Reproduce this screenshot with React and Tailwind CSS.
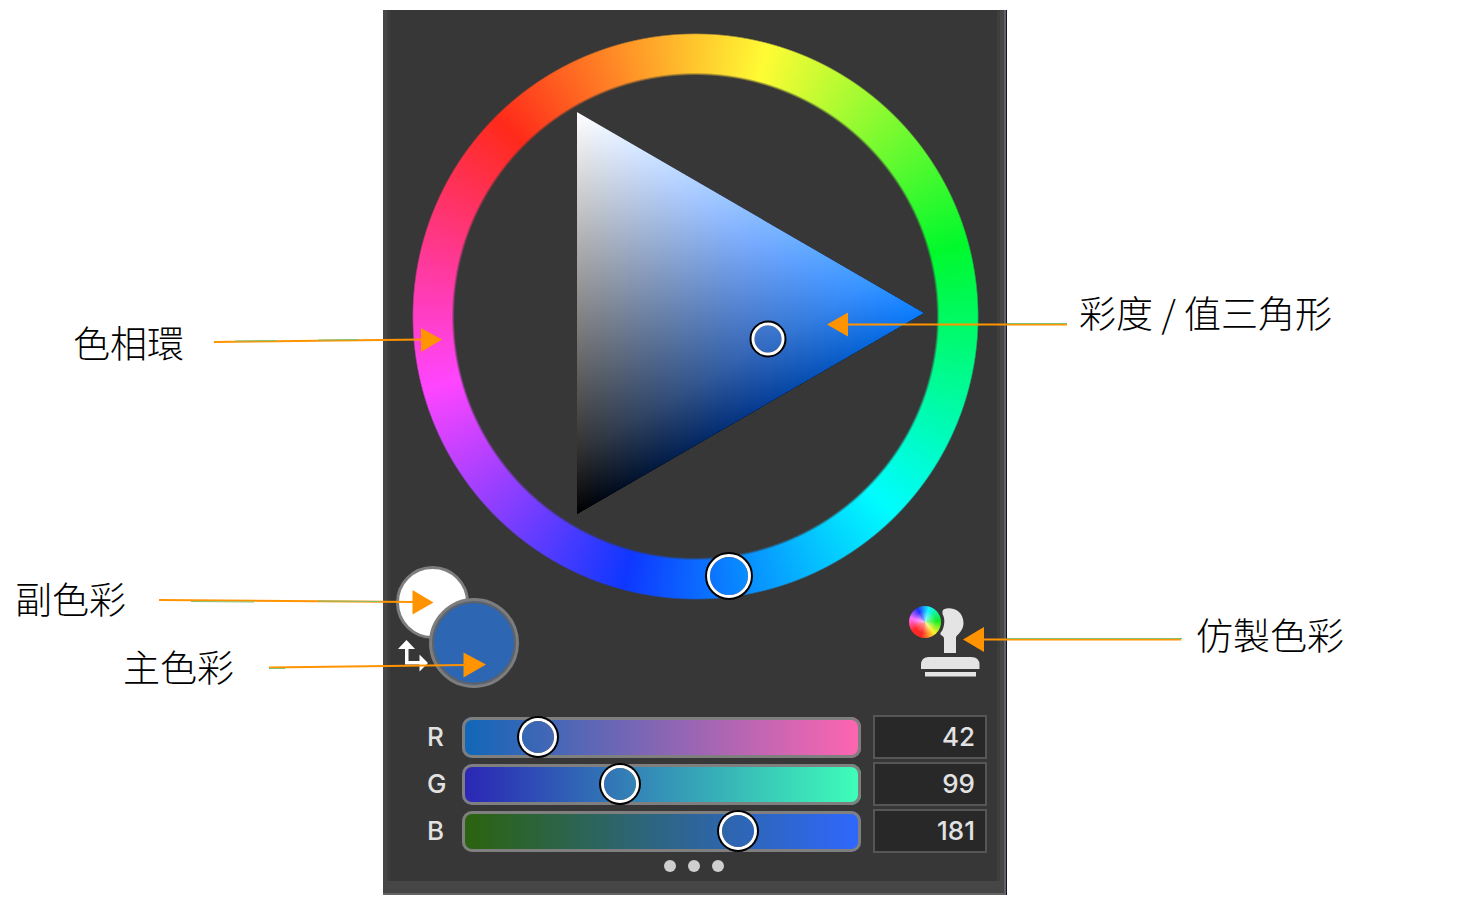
import { useState } from 'react';

const channels = [
  {
    id: 'red',
    label: 'R',
    value: 42,
    track: 'bg-linear-to-r/srgb from-[#0f67b8] to-[#ff65b1]',
  },
  {
    id: 'green',
    label: 'G',
    value: 99,
    track: 'bg-linear-to-r/srgb from-[#2b25b5] to-[#3effb9]',
  },
  {
    id: 'blue',
    label: 'B',
    value: 181,
    track: 'bg-linear-to-r/srgb from-[#2b630c] to-[#2f67ff]',
  },
];

function Handle({ cx, cy, r }) {
  return (
    <g fill="none">
      <circle cx={cx} cy={cy} r={r + 1} stroke="#000" strokeWidth="5" />
      <circle cx={cx} cy={cy} r={r} stroke="#fff" strokeWidth="3" />
    </g>
  );
}

function ColorWheel() {
  return (
    <div className="relative ml-[22px] mr-[18px] mt-[23px] aspect-square">
      <div className="size-full rounded-full bg-[conic-gradient(from_315deg,#ff2a1a,#fffb34_60deg,#00f92c_120deg,#00fdff_180deg,#0f37ff_240deg,#ff45ff_300deg,#ff2a1a)] mask-[radial-gradient(closest-side,transparent_85%,#000_86%,#000_99.4%,transparent)]" />
      <svg
        viewBox="0 0 567 567"
        className="absolute inset-0 size-full"
        role="img"
        aria-label="彩度 / 值三角形"
      >
        <defs>
          <linearGradient id="hue" gradientUnits="userSpaceOnUse" x1="165" y1="0" x2="512" y2="0">
            <stop offset="0" stopColor="#000" />
            <stop offset="0.5" stopColor="#05388c" />
            <stop offset="1" stopColor="#0a7cff" />
          </linearGradient>
          <linearGradient id="white" gradientUnits="userSpaceOnUse" x1="165" y1="79" x2="339" y2="380">
            <stop offset="0" stopColor="#fff" />
            <stop offset="0.5" stopColor="#868584" />
            <stop offset="0.85" stopColor="#2f2f2e" />
            <stop offset="1" stopColor="#000" />
          </linearGradient>
        </defs>
        <g className="isolate">
          <path d="M165 79V481L512 280Z" fill="url(#hue)" />
          <path d="M165 79V481L512 280Z" fill="url(#white)" className="mix-blend-plus-lighter" />
        </g>
        <Handle cx={356} cy={306} r={15} />
        <Handle cx={317} cy={543} r={20.5} />
      </svg>
    </div>
  );
}

function Swatches() {
  return (
    <div className="relative h-[122px] w-[123px]">
      <button
        type="button"
        aria-label="副色彩"
        className="absolute left-0 top-0 size-[73px] rounded-full border-3 border-[#7d7d7d] bg-white"
      />
      <button
        type="button"
        aria-label="主色彩"
        className="absolute bottom-0 right-0 size-[90px] rounded-full border-3 border-[#7d7d7d] bg-[#2d66b3] shadow-[inset_0_0_0_2px_#626262]"
      />
      <button type="button" aria-label="交換色彩" className="absolute bottom-4 left-0.5">
        <svg width="30" height="32" viewBox="0 0 30 32" fill="#fff">
          <path d="M8.500 0L17 9H10.500V21H21.500V14.500L30 23L21.500 31.500V24.500H7V9H0Z" />
        </svg>
      </button>
    </div>
  );
}

function CloneButton() {
  return (
    <button type="button" aria-label="仿製色彩" className="relative mb-2.5 self-end">
      <svg width="72" height="73" viewBox="0 0 72 73" fill="#e4e4e4">
        <path d="M34.500 6C36 1 55.500 1.500 55.500 18C55.500 23 53 27 49 30.500C48 31.500 48 32.500 48 34V48H36V34C36 31 34 31 32.500 29.500C32 28 33 27 34 26C37 20 37 13 34.500 9Z" />
        <path d="M13 64V60Q13 52 21 52H63Q71.500 52 71.500 60V64Z" />
        <path d="M17 67H68V71.500H17Z" />
      </svg>
      <span className="absolute left-px top-px size-8 rounded-full bg-[radial-gradient(closest-side,#fff9,#fff0_70%),conic-gradient(from_15deg,#15f5ff,#10f020_70deg,#fff030_125deg,#ff2828_180deg,#ff2828_220deg,#ff70ff_270deg,#2030ff_315deg,#15f5ff)]" />
    </button>
  );
}

function ChannelRow({ channel, value, onChange }) {
  return (
    <div className="flex h-11 items-center">
      <label htmlFor={channel.id} className="w-[35px] shrink-0">
        {channel.label}
      </label>
      <input
        id={channel.id}
        type="range"
        min="0"
        max="255"
        value={value}
        onChange={(e) => onChange(Number(e.target.value))}
        className={`h-[41px] min-w-0 flex-1 appearance-none rounded-[10px] shadow-[inset_0_0_0_3px_#7f7f7f] [&::-webkit-slider-thumb]:size-8 [&::-webkit-slider-thumb]:appearance-none [&::-webkit-slider-thumb]:rounded-full [&::-webkit-slider-thumb]:shadow-[0_0_0_3px_#fff,0_0_0_5px_#000] ${channel.track}`}
      />
      <input
        type="text"
        inputMode="numeric"
        aria-label={`${channel.label} 值`}
        value={value}
        onChange={(e) => onChange(Number(e.target.value) || 0)}
        className="ml-3 h-11 w-[114px] border-2 border-[#565656] bg-[#282828] pr-2.5 text-right"
      />
    </div>
  );
}

function ColorPanel() {
  const [values, setValues] = useState(channels.map((channel) => channel.value));

  function handleChange(index, value) {
    setValues(values.map((v, i) => (i === index ? value : v)));
  }

  return (
    <div className="border-r border-[#10152a]">
      <div className="border-b-2 border-r-2 border-[#636363]">
        <div className="border-x-4 border-b-12 border-[#464646]">
          <div className="flow-root border-x-3 border-[#3e3e3e] bg-[#373737]">
            <ColorWheel />
            <div className="relative -mt-[34px] flex justify-between pl-1.5 pr-[17px]">
              <Swatches />
              <CloneButton />
            </div>
            <div className="mt-[27px] flex flex-col gap-[3px] pl-[37px] pr-2.5 font-['Inter',sans-serif] text-[26px] font-medium text-[#e2e2e2]">
              {channels.map((channel, index) => (
                <ChannelRow
                  key={channel.id}
                  channel={channel}
                  value={values[index]}
                  onChange={(value) => handleChange(index, value)}
                />
              ))}
            </div>
            <button type="button" aria-label="更多" className="mx-auto mb-[9px] mt-[7px] flex gap-3">
              <span className="size-3 rounded-full bg-[#cecece]" />
              <span className="size-3 rounded-full bg-[#cecece]" />
              <span className="size-3 rounded-full bg-[#cecece]" />
            </button>
          </div>
        </div>
      </div>
    </div>
  );
}

// Callout lines from each caption to the part it names
function Pointers() {
  return (
    <svg
      viewBox="0 0 1479 898"
      className="pointer-events-none absolute inset-x-0 top-0 h-auto w-full"
      aria-hidden="true"
    >
      <g stroke="#ff9300" strokeWidth="2">
        <path d="M214 342L424 339.500" />
        <path d="M159 600L415 602" />
        <path d="M269 667.500L466 665" />
        <path d="M846 324.500H1067" />
        <path d="M982 639.500H1181" />
      </g>
      <g stroke="#82c272" strokeWidth="1">
        <path d="M235 341L276 340.500M318 340L358 339.500" />
        <path d="M191 601.500L254 602M318 601L381 601.500" />
        <path d="M269 668.500H285" />
        <path d="M1007 323.500H1067M1007 638.500H1182" />
      </g>
      <g fill="#ff9300">
        <path d="M421 328L442 339.500L421 352Z" />
        <path d="M412.500 590L433.500 602.500L412.500 614.500Z" />
        <path d="M463.500 652.500L486 664.500L463.500 677.500Z" />
        <path d="M848 312.500V336.500L827 324.500Z" />
        <path d="M984 627V652L963 639.500Z" />
      </g>
    </svg>
  );
}

export default function App() {
  return (
    <main className="relative grid grid-cols-[383fr_624fr_472fr] bg-white pt-2.5 font-['Noto_Sans_CJK_TC',sans-serif] text-[37px] font-light leading-12 text-black">
      <div className="flex flex-col items-start whitespace-nowrap pt-[308px]">
        <p className="ml-[73px]">色相環</p>
        <p className="ml-[15px] mt-52">副色彩</p>
        <p className="ml-[123px] mt-5">主色彩</p>
      </div>
      <ColorPanel />
      <div className="flex flex-col items-start whitespace-nowrap pt-[278px]">
        <p className="ml-[72px]">彩度 / 值三角形</p>
        <p className="ml-[189px] mt-[274px]">仿製色彩</p>
      </div>
      <Pointers />
    </main>
  );
}
